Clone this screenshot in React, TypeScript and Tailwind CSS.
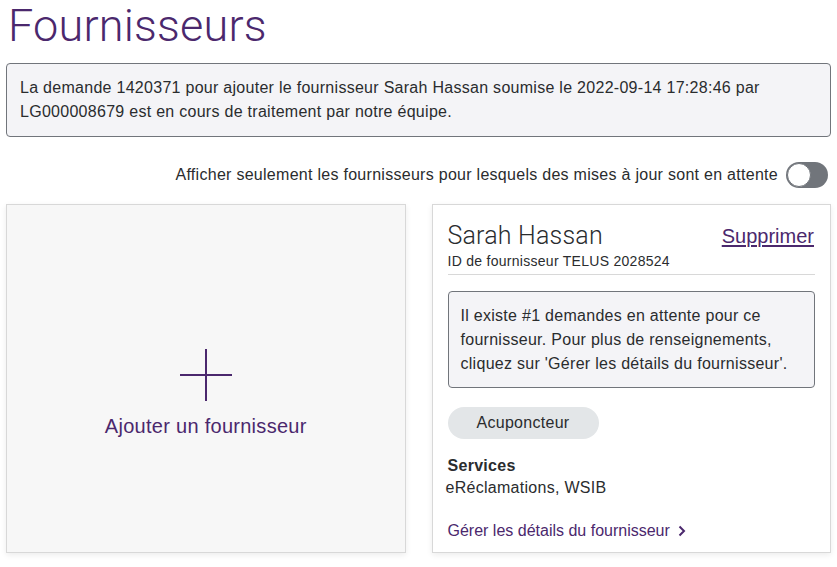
import React, { useState } from 'react';

const PURPLE = 'text-[#4b286d]';

const App = () => {
  const [pendingOnly, setPendingOnly] = useState(false);

  return (
    <div className="min-h-screen w-[837px] bg-white tracking-[0.28px] text-[#2a2c2e] font-['Liberation_Sans',Arial,sans-serif]">
      {/* En-tête */}
      <h1 className={`px-2 text-[45px] font-light leading-[52px] tracking-[0.2px] font-['Roboto',sans-serif] ${PURPLE}`}>
        Fournisseurs
      </h1>

      {/* Avis de demande */}
      <div className="mx-[6px] mt-[11px] rounded border border-[#71757b] bg-[#f4f4f7] px-[13px] py-[12px] text-[16px] leading-6">
        La demande 1420371 pour ajouter le fournisseur Sarah Hassan soumise le 2022-09-14 17:28:46 par LG000008679 est en cours
        de traitement par notre équipe.
      </div>

      {/* Filtre */}
      <div className="mt-[25px] flex items-center justify-end gap-2 pr-[9px] text-[16px]">
        <span>Afficher seulement les fournisseurs pour lesquels des mises à jour sont en attente</span>
        <button
          onClick={() => setPendingOnly(!pendingOnly)}
          className={`relative h-[26px] w-[42px] rounded-full ${pendingOnly ? 'bg-[#2b8000]' : 'bg-[#71757b]'}`}
        >
          <span
            className={`absolute top-[1px] h-6 w-6 rounded-full border border-[#71757b] bg-white ${pendingOnly ? 'left-[17px]' : 'left-[1px]'}`}
          />
        </button>
      </div>

      {/* Cartes */}
      <div className="mt-[16px] grid grid-cols-2 gap-[26px] px-[6px]">
        <button className="flex h-[349px] flex-col items-center justify-center border border-[#d8d8d8] bg-[#f7f7f7] pt-[32px] shadow-[0_2px_6px_rgba(0,0,0,0.08)]">
          <svg width="54" height="54" viewBox="0 0 54 54">
            <path d="M27 1v52M1 27h52" stroke="#4b286d" strokeWidth="2" fill="none" />
          </svg>
          <span className={`mt-[9px] text-[20px] ${PURPLE}`}>Ajouter un fournisseur</span>
        </button>

        <div className="flex h-[349px] flex-col border border-[#d8d8d8] bg-white px-[15px] pt-[16px] shadow-[0_2px_6px_rgba(0,0,0,0.08)]">
          <div className="flex items-start justify-between">
            <span className="text-[25px] font-light leading-[30px] tracking-[0.2px] font-['Roboto',sans-serif]">Sarah Hassan</span>
            <a href="#" className={`mr-[1px] text-[20px] leading-[30px] tracking-normal underline underline-offset-2 ${PURPLE}`}>
              Supprimer
            </a>
          </div>
          <div className="border-b border-[#d8d8d8] pb-[3px] text-[14px] leading-5">ID de fournisseur TELUS 2028524</div>

          <div className="mt-[16px] rounded border border-[#71757b] bg-[#f4f4f7] px-[12px] pt-[12px] pb-[11px] text-[16px] leading-6">
            Il existe #1 demandes en attente pour ce fournisseur. Pour plus de renseignements, cliquez sur 'Gérer les détails du
            fournisseur'.
          </div>

          <span className="mt-[19px] flex h-8 w-[151px] items-center justify-center rounded-full bg-[#e3e6e8] text-[16px]">
            Acuponcteur
          </span>

          <div className="mt-[17px] text-[16px] font-bold leading-5">Services</div>
          <div className="-ml-[2px] mt-[2px] text-[16px] leading-5">eRéclamations, WSIB</div>

          <a href="#" className={`mt-[23px] flex items-center gap-[8px] text-[16px] leading-5 tracking-normal ${PURPLE}`}>
            Gérer les détails du fournisseur
            <svg width="8" height="12" viewBox="0 0 8 12">
              <path d="M1.5 1.5L6 6l-4.5 4.5" stroke="#4b286d" strokeWidth="2" fill="none" />
            </svg>
          </a>
        </div>
      </div>
    </div>
  );
};

export default App;
